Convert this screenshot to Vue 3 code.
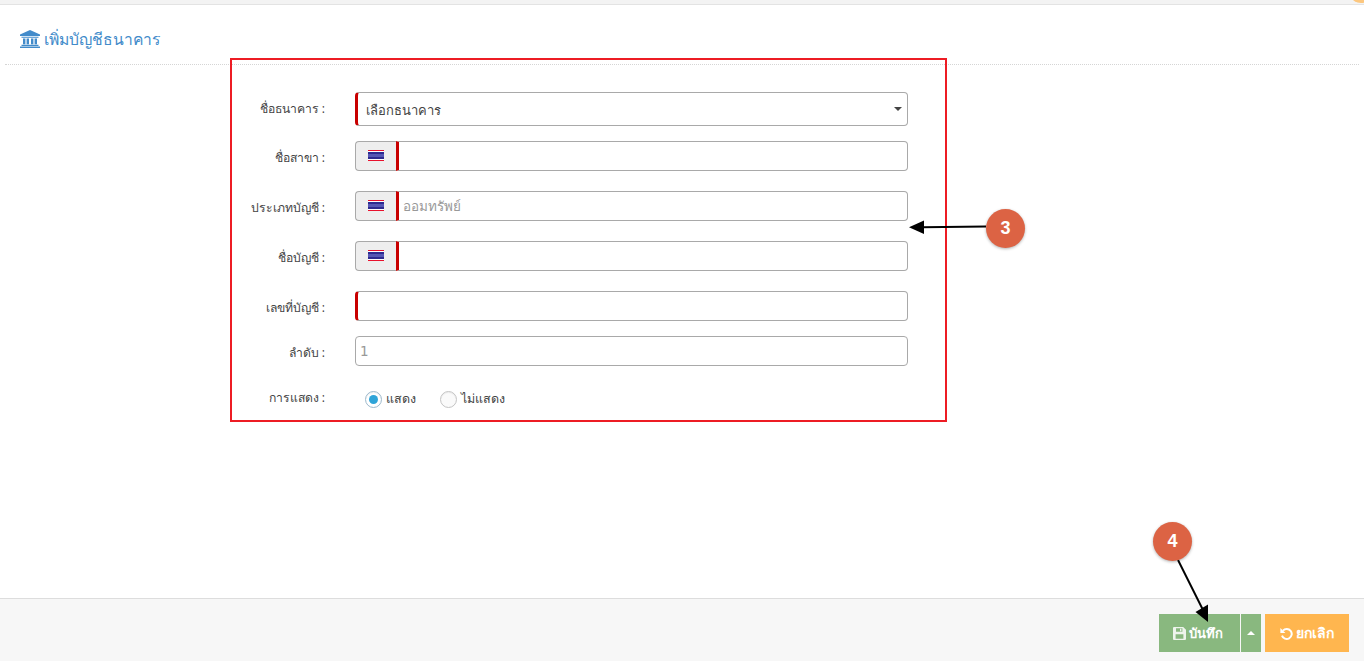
<script setup>
const rows = [
  { label: 'ชื่อสาขา :', flag: true, placeholder: '', gap: 'g15' },
  { label: 'ประเภทบัญชี :', flag: true, placeholder: 'ออมทรัพย์', gap: 'g20' },
  { label: 'ชื่อบัญชี :', flag: true, placeholder: '', gap: 'g20' },
  { label: 'เลขที่บัญชี :', flag: false, req: true, placeholder: '', gap: 'g20' },
  { label: 'ลำดับ :', flag: false, placeholder: '1', gap: 'g15' }
]
</script>

<template>
  <div class="page">
    <div class="topstrip"><span class="corner"></span></div>
    <header class="head">
      <h1 class="title">
        <svg class="bank" viewBox="0 0 20 18" width="20" height="18">
          <path fill="#428bca" d="M10 0 20 4.600V6H0V4.600zM1.500 6.800h17v1H1.500zM3 8.600h2.400v5.600H3zM6.600 8.600H9v5.600H6.600zM11 8.600h2.400v5.600H11zM14.600 8.600H17v5.600h-2.400zM1.500 14.800h17v1.200h-17zM0 16.600h20V18H0z"/>
        </svg>
        เพิ่มบัญชีธนาคาร
      </h1>
    </header>

    <main class="body">
      <form class="form">
        <div class="row">
          <label class="lbl first">ชื่อธนาคาร :</label>
          <div class="select">
            <span class="seltext">เลือกธนาคาร</span>
            <i class="caret"></i>
          </div>
        </div>
        <div v-for="r in rows" :key="r.label" class="row" :class="r.gap">
          <label class="lbl">{{ r.label }}</label>
          <div class="group">
            <span v-if="r.flag" class="addon">
              <svg class="flag" width="16" height="11" viewBox="0 0 16 11">
                <rect width="16" height="11" fill="#e8112d"/>
                <rect y="1" width="16" height="9" fill="#fff"/>
                <rect y="2" width="16" height="7" fill="#2d2a8f"/>
                <rect y="4" width="16" height="3" fill="#5556b4"/>
              </svg>
            </span>
            <input class="field" :class="{ req: r.req, flagged: r.flag }" :placeholder="r.placeholder" />
          </div>
        </div>
        <div class="row radios">
          <label class="lbl raised">การแสดง :</label>
          <div class="choices">
            <span class="choice"><i class="radio on"></i>แสดง</span>
            <span class="choice"><i class="radio"></i>ไม่แสดง</span>
          </div>
        </div>
      </form>
    </main>

    <footer class="foot">
      <button class="btn save" type="button">
        <svg width="13" height="13" viewBox="0 0 13 13">
          <path fill="#eef4ec" fill-rule="evenodd" d="M1 0h9.200L13 2.800V12a1 1 0 0 1-1 1H1a1 1 0 0 1-1-1V1a1 1 0 0 1 1-1zm2 1.200v3.600h6.400V1.200zM7 1.800h1.400v2.400H7zM2.600 7.200v4.600h7.800V7.200z"/>
        </svg>
        บันทึก
      </button>
      <button class="btn up" type="button"><i class="upcaret"></i></button>
      <button class="btn cancel" type="button">
        <svg width="13" height="13" viewBox="0 0 13 13">
          <path fill="none" stroke="#fff" stroke-width="2" d="M3 3.600A5 5 0 1 1 2 8.600"/>
          <path fill="#fff" d="M0.400 1v5h5z"/>
        </svg>
        ยกเลิก
      </button>
    </footer>

    <div class="redbox"></div>
    <svg class="arrows" width="1364" height="661" viewBox="0 0 1364 661">
      <path d="M986 226.500 922 227.200" stroke="#000" stroke-width="2" fill="none"/>
      <path d="M909 227.300 924 220.500V234z" fill="#000"/>
      <path d="M1178 560 1203 610" stroke="#000" stroke-width="2" fill="none"/>
      <path d="M1208 622 1195.500 612 1208 604.500z" fill="#000"/>
    </svg>
    <span class="badge b3">3</span>
    <span class="badge b4">4</span>
  </div>
</template>

<style>
html, body { margin: 0; background: #fff; }
</style>

<style scoped>
.page {
  position: relative;
  width: 1364px;
  height: 661px;
  display: flex;
  flex-direction: column;
  overflow: hidden;
  font-family: "Open Sans", "Noto Sans", "Liberation Sans", sans-serif;
  color: #333;
  background: #fff;
}
.topstrip {
  position: relative;
  height: 4px;
  background: #f3f3f3;
  border-bottom: 1px solid #e3e3e3;
  flex: none;
  overflow: hidden;
}
.corner {
  position: absolute;
  right: -6px;
  top: -9px;
  width: 18px;
  height: 12px;
  border-radius: 50%;
  background: #fcc77f;
}
.head {
  flex: none;
  height: 59px;
  margin: 0 5px;
  padding-left: 15px;
  border-bottom: 1px dotted #d5d5d5;
  display: flex;
  align-items: center;
}
.title {
  margin: 0;
  font-size: 15.700px;
  font-weight: 400;
  color: #428bca;
  display: flex;
  align-items: center;
  gap: 4px;
  position: relative;
  top: 5px;
}
.bank { flex: none; position: relative; top: -1px; }
.body { flex: 1; min-height: 0; padding-top: 27px; }
.form { width: 908px; }
.row { display: flex; align-items: center; }
.g15 { margin-top: 15px; }
.g20 { margin-top: 20px; }
.lbl {
  width: 325px;
  padding-top: 2px;
  box-sizing: border-box;
  text-align: right;
  font-size: 12.200px;
  color: #444;
  flex: none;
}
.lbl.first { padding-top: 0; padding-bottom: 2px; }
.lbl.raised { padding-top: 0; padding-bottom: 4px; }
.select {
  width: 553px;
  height: 34px;
  margin-left: 30px;
  box-sizing: border-box;
  border: 1px solid #a9a9a9;
  border-left: 3px solid #c80000;
  border-radius: 4px;
  display: flex;
  align-items: center;
  justify-content: space-between;
  padding: 0 5px 0 8px;
  font-size: 13px;
  color: #444;
}
.seltext { padding-top: 2px; }
.caret {
  width: 0;
  height: 0;
  border-left: 4px solid transparent;
  border-right: 4px solid transparent;
  border-top: 4px solid #444;
}
.group { width: 553px; height: 30px; display: flex; margin-left: 30px; }
.addon {
  width: 41px;
  flex: none;
  box-sizing: border-box;
  background: #eee;
  border: 1px solid #a9a9a9;
  border-right: 0;
  border-radius: 4px 0 0 4px;
  display: flex;
  align-items: center;
  justify-content: center;
}
.flag { display: block; margin-bottom: 1px; }
.field {
  flex: 1;
  min-width: 0;
  height: 30px;
  box-sizing: border-box;
  border: 1px solid #a9a9a9;
  border-radius: 4px;
  padding: 0 4px;
  font: 13.500px "DejaVu Sans", "Noto Sans", "Liberation Sans", sans-serif;
  color: #444;
  outline: none;
  background: #fff;
}
.field::placeholder { color: #999; opacity: 1; }
.field.flagged { border-left: 3px solid #c80000; border-radius: 0 4px 4px 0; }
.field.req { border-left: 3px solid #c80000; }
.radios { margin-top: 23px; height: 20px; }
.choices { display: flex; margin-left: 40px; gap: 24px; font-size: 12.500px; color: #444; }
.choice { display: flex; align-items: center; gap: 4px; }
.radio {
  width: 17px;
  height: 17px;
  box-sizing: border-box;
  border: 1px solid #c4c4c4;
  border-radius: 50%;
  background: #fafafa;
  box-shadow: inset 0 1px 1px rgba(0,0,0,.06);
  position: relative;
}
.radio.on { border-color: #9db9cc; background: #fff; }
.radio.on::after {
  content: "";
  position: absolute;
  left: 3px;
  top: 3px;
  width: 9px;
  height: 9px;
  border-radius: 50%;
  background: #2fa4d8;
}
.foot {
  flex: none;
  height: 63px;
  box-sizing: border-box;
  background: #f7f7f7;
  border-top: 1px solid #ddd;
  padding: 15px 15px 0 0;
  display: flex;
  justify-content: flex-end;
}
.btn {
  height: 38px;
  border: 0;
  padding: 0;
  color: #fff;
  font: 700 13px "Open Sans", "Noto Sans", "Liberation Sans", sans-serif;
  display: flex;
  align-items: center;
  justify-content: center;
  gap: 3px;
}
.save { width: 81px; padding-right: 3px; background: #89b87f; }
.up { width: 20px; margin-left: 1px; background: #89b87f; }
.cancel { width: 84px; margin-left: 4px; font-size: 14px; background: #ffb64f; }
.upcaret {
  width: 0;
  height: 0;
  border-left: 4px solid transparent;
  border-right: 4px solid transparent;
  border-bottom: 4px solid #fff;
}
.redbox {
  position: absolute;
  left: 230px;
  top: 58px;
  width: 717px;
  height: 364px;
  box-sizing: border-box;
  border: 2px solid #ed1c24;
  pointer-events: none;
}
.arrows { position: absolute; left: 0; top: 0; pointer-events: none; }
.badge {
  position: absolute;
  width: 39px;
  height: 39px;
  border-radius: 50%;
  background: #dc6344;
  color: #fff;
  font: 700 18px/39px "Liberation Sans", sans-serif;
  text-align: center;
  box-shadow: 0 1px 3px rgba(0,0,0,.3);
}
.b3 { left: 986px; top: 209px; }
.b4 { left: 1153px; top: 522px; }
</style>
